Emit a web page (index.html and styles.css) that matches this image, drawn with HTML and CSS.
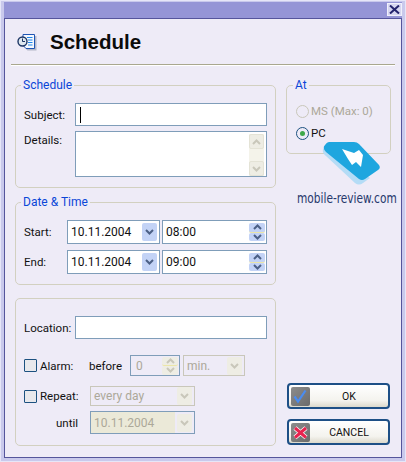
FILE: index.html
```html
<!DOCTYPE html>
<html lang="en">
<head>
  <meta charset="UTF-8" />
  <title>Schedule</title>
  <link rel="stylesheet" href="styles.css">
</head>
<body>

<div class="window">
  <div class="titlebar">
    <div class="close-button">
      <svg width="11" height="9" viewBox="0 0 11 9"><path d="M1 0.5l9 8M10 0.5l-9 8" /></svg>
    </div>
  </div>

  <div class="client">
    <header class="heading">
      <svg class="heading-icon" width="20" height="18" viewBox="0 0 20 18">
        <path d="M7 1.500h11v14.500h-9l-2-2z" fill="#b4b8c8" transform="translate(1.500 1.500)" />
        <path d="M6 1.500h11.500v14h-8.500l-3-3z" fill="#f4f8ff" stroke="#1f55b4" />
        <path d="M10 4.500h5.500M11 7h4.500M11 9.500h4.500M11 12h4.500" stroke="#1f86ea" stroke-width="1.200" fill="none" />
        <circle cx="5.500" cy="8.500" r="4.500" fill="#dfe8f0" stroke="#1c3564" stroke-width="1.400" />
        <path d="M5.500 5.500v3h2.500" stroke="#1c3564" fill="none" />
      </svg>
      <h1>Schedule</h1>
    </header>
    <hr />

    <div class="content">
      <div class="left-col">
        <fieldset class="group">
          <legend>Schedule</legend>
          <div class="rows rows-subject">
            <div class="row">
              <label class="label">Subject:</label>
              <div class="field subject"><span class="caret"></span></div>
            </div>
            <div class="row row-top">
              <label class="label">Details:</label>
              <div class="field details">
                <div class="scrollbar">
                  <div class="btn btn-off scroll-btn"><svg class="chev" viewBox="0 0 9 6"><path d="M1 5l3.500-3.500L8 5" /></svg></div>
                  <div class="btn btn-off scroll-btn"><svg class="chev" viewBox="0 0 9 6"><path d="M1 1l3.500 3.500L8 1" /></svg></div>
                </div>
              </div>
            </div>
          </div>
        </fieldset>

        <fieldset class="group">
          <legend>Date &amp; Time</legend>
          <div class="rows rows-date">
            <div class="row">
              <label class="label label-short">Start:</label>
              <div class="field date"><span>10.11.2004</span>
                <div class="btn drop"><svg class="chev" viewBox="0 0 9 6"><path d="M1 1l3.500 3.500L8 1" /></svg></div>
              </div>
              <div class="field time"><span>08:00</span>
                <div class="spin">
                  <div class="btn"><svg class="chev" viewBox="0 0 9 6"><path d="M1 5l3.500-3.500L8 5" /></svg></div>
                  <div class="btn"><svg class="chev" viewBox="0 0 9 6"><path d="M1 1l3.500 3.500L8 1" /></svg></div>
                </div>
              </div>
            </div>
            <div class="row">
              <label class="label label-short">End:</label>
              <div class="field date"><span>10.11.2004</span>
                <div class="btn drop"><svg class="chev" viewBox="0 0 9 6"><path d="M1 1l3.500 3.500L8 1" /></svg></div>
              </div>
              <div class="field time"><span>09:00</span>
                <div class="spin">
                  <div class="btn"><svg class="chev" viewBox="0 0 9 6"><path d="M1 5l3.500-3.500L8 5" /></svg></div>
                  <div class="btn"><svg class="chev" viewBox="0 0 9 6"><path d="M1 1l3.500 3.500L8 1" /></svg></div>
                </div>
              </div>
            </div>
          </div>
        </fieldset>

        <fieldset class="group group-plain">
          <div class="row">
            <label class="label">Location:</label>
            <div class="field subject"></div>
          </div>
          <div class="row row-alarm">
            <label class="check check-alarm"><span class="checkbox"></span>Alarm:</label>
            <span class="before">before</span>
            <div class="field alarm-num off-text"><span>0</span>
              <div class="spin">
                <div class="btn btn-off"><svg class="chev" viewBox="0 0 9 6"><path d="M1 5l3.500-3.500L8 5" /></svg></div>
                <div class="btn btn-off"><svg class="chev" viewBox="0 0 9 6"><path d="M1 1l3.500 3.500L8 1" /></svg></div>
              </div>
            </div>
            <div class="field field-off alarm-unit off-text"><span>min.</span>
              <div class="btn btn-off drop"><svg class="chev" viewBox="0 0 9 6"><path d="M1 1l3.500 3.500L8 1" /></svg></div>
            </div>
          </div>
          <div class="row row-repeat">
            <label class="check check-repeat"><span class="checkbox"></span>Repeat:</label>
            <div class="field field-off repeat off-text"><span>every day</span>
              <div class="btn btn-off drop"><svg class="chev" viewBox="0 0 9 6"><path d="M1 1l3.500 3.500L8 1" /></svg></div>
            </div>
          </div>
          <div class="row row-until">
            <label class="until">until</label>
            <div class="field until-date off-text"><span class="until-value">10.11.2004</span>
              <div class="btn btn-off drop"><svg class="chev" viewBox="0 0 9 6"><path d="M1 1l3.500 3.500L8 1" /></svg></div>
            </div>
          </div>
        </fieldset>
      </div>

      <div class="right-col">
        <fieldset class="group group-at">
          <legend>At</legend>
          <div class="radios">
            <label class="radio off-text"><span class="radio-dot radio-off"></span>MS (Max: 0)</label>
            <label class="radio"><span class="radio-dot radio-on"></span>PC</label>
          </div>
        </fieldset>

        <div class="actions">
          <button class="action">
            <span class="tile">
              <svg width="19" height="19" viewBox="0 0 19 19"><path d="M3.500 9.500l3.500 5 7.500-11" fill="none" stroke="#4a8cf0" stroke-width="2.200" /></svg>
            </span>
            <span class="action-text">OK</span>
          </button>
          <button class="action">
            <span class="tile">
              <svg width="19" height="19" viewBox="0 0 19 19"><path d="M4 5l11 9.500M15 5l-11 9.500" fill="none" stroke="#fff" stroke-width="4.500" /><path d="M4 5l11 9.500M15 5l-11 9.500" fill="none" stroke="#e8234f" stroke-width="3" /></svg>
            </span>
            <span class="action-text">CANCEL</span>
          </button>
        </div>
      </div>
    </div>
  </div>

  <!-- site watermark sits over the dialog -->
  <svg class="wm-logo" width="66" height="56" viewBox="0 0 66 56">
    <path d="M5 13Q4 17 8 20L37 47Q41 50 45 47L52 42L8 12z" fill="#b4dcf6" />
    <path d="M11 6L36 6Q39 6 41 8L61 29Q63 32 60 34L47 43Q44 45 41 43L8 16Q4 12 7 9Q9 6 11 6z" fill="#1ea6df" />
    <path d="M24 13L36 17L41 14L45 19L43 31L38 26L34 29L30 23z" fill="#fff" />
  </svg>
  <div class="wm-text">mobile-review.com</div>
</div>

</body>
</html>
```

FILE: styles.css
```css
* { box-sizing: border-box; }
body {
  margin: 0;
  font-family: Roboto, 'Liberation Sans', sans-serif;
  font-size: 11px;
  color: #111;
}
.window {
  position: relative;
  width: 406px; height: 462px;
  background: #c9c9ec;
  padding: 1px 3px 3px 3px;
  border: 1px solid #e6e6f8;
  display: flex; flex-direction: column;
}
.titlebar {
  height: 16px; background: #9595d6;
  display: flex; justify-content: flex-end;
  flex-shrink: 0;
}
.close-button {
  width: 15px; height: 13px; margin: 1px 0 0;
  background: #d6d6f0; border: 1px solid #f0f0fb;
  display: flex; align-items: center; justify-content: center;
}
.close-button path { stroke: #24246e; stroke-width: 2; fill: none; }
.client {
  flex: 1;
  background: #eeebf7;
  border: 1px solid #55559c;
  padding: 0 6px;
}
.heading {
  height: 45px;
  display: flex; align-items: center; gap: 13px;
  padding-left: 6px;
}
.heading h1 {
  margin: 0;
  font-family: 'Liberation Sans', Arial, sans-serif;
  font-size: 20.500px; font-weight: bold;
  color: #0b0b0b;
}
hr {
  margin: 0; border: none; height: 2px;
  border-top: 1px solid #a9a78f;
  background: #fff;
}
.content {
  display: flex; gap: 10px;
  padding: 12px 0 0 4px;
}
.left-col { width: 261px; }
.right-col { width: 105px; display: flex; flex-direction: column; }

.group {
  margin: 0 0 7px; padding: 11px 8px 10px;
  border: 1px solid #d2d0c0; border-radius: 5px;
  min-width: 0;
}
.group legend {
  padding: 0 2px; margin-left: -3px;
  line-height: 14px; font-size: 12px;
  color: #0a46d8;
}
.group-plain { margin: 13px 0 0; padding: 17px 8px 11px; }
.group-at { margin: 0; padding: 11px 9px 12px; }

.rows { display: flex; flex-direction: column; }
.rows-subject { gap: 5px; }
.rows-date { gap: 6px; }
.row { display: flex; align-items: center; }
.row-top { align-items: flex-start; }
.row-top .label { padding-top: 2px; }
.label { width: 51px; font-size: 11.500px; }
.label-short { width: 43px; }

.field {
  display: flex; align-items: center; justify-content: space-between;
  background: #fff;
  border: 1px solid #7f9db9;
  padding-left: 3px;
  font-size: 12px;
}
.field-off { border-color: #c9c7ba; background: #eeebf7; }
.off-text { color: #aca899; }
.subject { width: 192px; height: 23px; padding-left: 4px; }
.caret { width: 1px; height: 16px; background: #000; }
.details { width: 192px; height: 46px; align-items: flex-start; justify-content: flex-end; padding: 2px 2px 0 0; }
.date { width: 93px; height: 24px; }
.time { width: 105px; height: 24px; margin-left: 2px; }

.btn {
  display: flex; align-items: center; justify-content: center;
  background: #c3d3f6; border-radius: 2px;
}
.btn-off { background: #eeede4; }
.chev { width: 9px; height: 6px; }
.chev path { fill: none; stroke: #4c6086; stroke-width: 2; }
.btn-off .chev path { stroke: #c9c7ba; }
.drop { width: 15px; height: 18px; margin-right: 2px; }
.spin {
  width: 16px; height: 18px; margin-right: 1px;
  display: flex; flex-direction: column;
}
.spin .btn { flex: 1; }
.spin .btn:first-child { border-bottom: 1px solid #ece6a8; }
.scrollbar {
  width: 15px; height: 42px;
  background: #f4f3ea;
  display: flex; flex-direction: column; justify-content: space-between;
}
.scroll-btn { height: 15px; border: 1px solid #e4e3d6; }

.row-alarm { margin-top: 16px; height: 21px; }
.row-repeat { margin-top: 10px; height: 20px; }
.row-until { margin-top: 5px; }
.check { display: flex; align-items: center; gap: 3px; font-size: 11.500px; }
.check-alarm { width: 65px; }
.check-repeat { width: 66px; }
.checkbox {
  width: 13px; height: 13px;
  border: 1px solid #1c5180; border-radius: 1px;
  background: #e8e8ec;
}
.before { width: 41px; font-size: 11.500px; }
.alarm-num { width: 50px; height: 21px; background: #eeebf7; padding-left: 5px; }
.alarm-unit { width: 62px; height: 21px; margin-left: 3px; }
.repeat { width: 105px; height: 20px; }
.until { width: 66px; padding: 0 12px 0 0; text-align: right; font-size: 11.500px; }
.until-date { width: 105px; height: 23px; padding: 0; background: #eeebf7; }
.until-value {
  flex: 1; height: 100%; margin-right: 2px; padding-left: 3px;
  display: flex; align-items: center;
  background: #ebe9d8;
}

.radios { display: flex; flex-direction: column; gap: 6px; }
.radio { height: 16px; display: flex; align-items: center; gap: 2px; font-size: 11.500px; }
.radio-dot {
  width: 13px; height: 13px; border-radius: 50%;
  background: #eeebf7; border: 1px solid #1c5180;
  display: flex; align-items: center; justify-content: center;
}
.radio-off { border-color: #c9c7ba; }
.radio-on::after {
  content: ""; width: 5px; height: 5px; border-radius: 50%;
  background: #3fa84a;
}

.actions {
  margin-top: auto;
  display: flex; flex-direction: column; gap: 10px;
  padding: 0 1px 1px;
}
.action {
  height: 26px; width: 103px; padding: 2px 0 0 2px;
  display: flex; align-items: flex-start;
  background: linear-gradient(#fff, #f4f3ee 70%, #dcd9cc);
  border: 2px solid #1d4f86; border-radius: 4px;
  font-family: inherit; font-size: 10.500px; color: #111;
}
.tile {
  width: 19px; height: 19px; border-radius: 2px;
  background: linear-gradient(135deg, #8c8c8c, #6b6b6b);
  display: block;
}
.tile svg { display: block; }
.action-text { flex: 1; text-align: center; line-height: 19px; }

.wm-logo { position: absolute; left: 317px; top: 135px; }
.wm-text {
  position: absolute; left: 296px; top: 188px;
  font-family: 'DejaVu Sans', sans-serif;
  font-size: 14.500px; line-height: 18px;
  color: #27386c; white-space: nowrap;
  transform: scaleX(0.73); transform-origin: left center;
}
```
